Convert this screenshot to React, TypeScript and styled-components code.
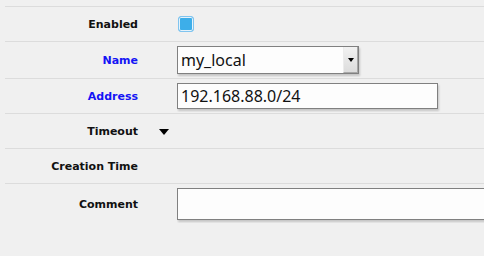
import * as React from 'react';
import styled, { createGlobalStyle } from 'styled-components';

const Global = createGlobalStyle`
    html, body {
        margin: 0;
        padding: 0;
        background: #f0f0f0;
        overflow: hidden;
    }
`;

const Form = styled.div`
    box-sizing: border-box;
    padding: 6px 0 0 5px;
    width: 484px;
    overflow: hidden;
    font-family: "DejaVu Sans", Verdana, sans-serif;
`;

const Row = styled.div`
    display: grid;
    grid-template-columns: 133px 39px 1fr;
    align-items: center;
    border-top: 1px solid #dcdcdc;
    padding: 4px 0;
    min-height: 26px;
`;

const Label = styled.div<{ $required?: boolean }>`
    text-align: right;
    font-size: 11px;
    font-weight: bold;
    color: ${p => (p.$required ? '#1414f5' : '#111')};
`;

const Toggle = styled.div`
    justify-self: start;
    margin: 1px 0 0 21px;
    width: 0;
    height: 0;
    border-left: 5px solid transparent;
    border-right: 5px solid transparent;
    border-top: 6px solid #000;
`;

const Value = styled.div`
    display: flex;
    align-items: center;
    min-width: 0;
    overflow: hidden;
    padding-bottom: 3px;
    margin-bottom: -3px;
`;

const Check = styled.div`
    width: 14px;
    height: 14px;
    margin-left: 1px;
    border: 1px solid #80c4ef;
    border-radius: 3px;
    background: #3daee9;
    box-shadow: inset 0 0 0 1px #e4f2fb;
`;

const Field = styled.div<{ $w: number; $h: number }>`
    box-sizing: border-box;
    display: flex;
    align-items: center;
    width: ${p => p.$w}px;
    height: ${p => p.$h}px;
    flex-shrink: 0;
    background: #fdfdfd;
    border: 1px solid #808080;
    box-shadow: 1px 2px 2px rgba(0, 0, 0, 0.18);
    font-family: "Noto Sans", "Open Sans", sans-serif;
    font-size: 16px;
    color: #111;
    padding-left: 3px;
`;

const FieldText = styled.span`
    flex: 1;
`;

const DropButton = styled.div`
    align-self: stretch;
    width: 13px;
    display: flex;
    align-items: center;
    justify-content: center;
    background: linear-gradient(#f2f2f2, #dcdcdc);
    border-left: 1px solid #ececec;
    border-right: 1px solid #a8a8a8;
    border-bottom: 1px solid #a8a8a8;
    &::after {
        content: '';
        border-left: 3px solid transparent;
        border-right: 3px solid transparent;
        border-top: 4px solid #000;
    }
`;

export default function App() {
    return (
        <>
            <Global />
            <Form>
                <Row>
                    <Label>Enabled</Label>
                    <span />
                    <Value><Check /></Value>
                </Row>
                <Row>
                    <Label $required>Name</Label>
                    <span />
                    <Value>
                        <Field $w={182} $h={28}>
                            <FieldText>my_local</FieldText>
                            <DropButton />
                        </Field>
                    </Value>
                </Row>
                <Row>
                    <Label $required>Address</Label>
                    <span />
                    <Value>
                        <Field $w={261} $h={26}>
                            <FieldText>192.168.88.0/24</FieldText>
                        </Field>
                    </Value>
                </Row>
                <Row>
                    <Label>Timeout</Label>
                    <Toggle />
                    <Value />
                </Row>
                <Row>
                    <Label>Creation Time</Label>
                    <span />
                    <Value />
                </Row>
                <Row>
                    <Label>Comment</Label>
                    <span />
                    <Value>
                        <Field $w={340} $h={32} />
                    </Value>
                </Row>
            </Form>
        </>
    );
}
